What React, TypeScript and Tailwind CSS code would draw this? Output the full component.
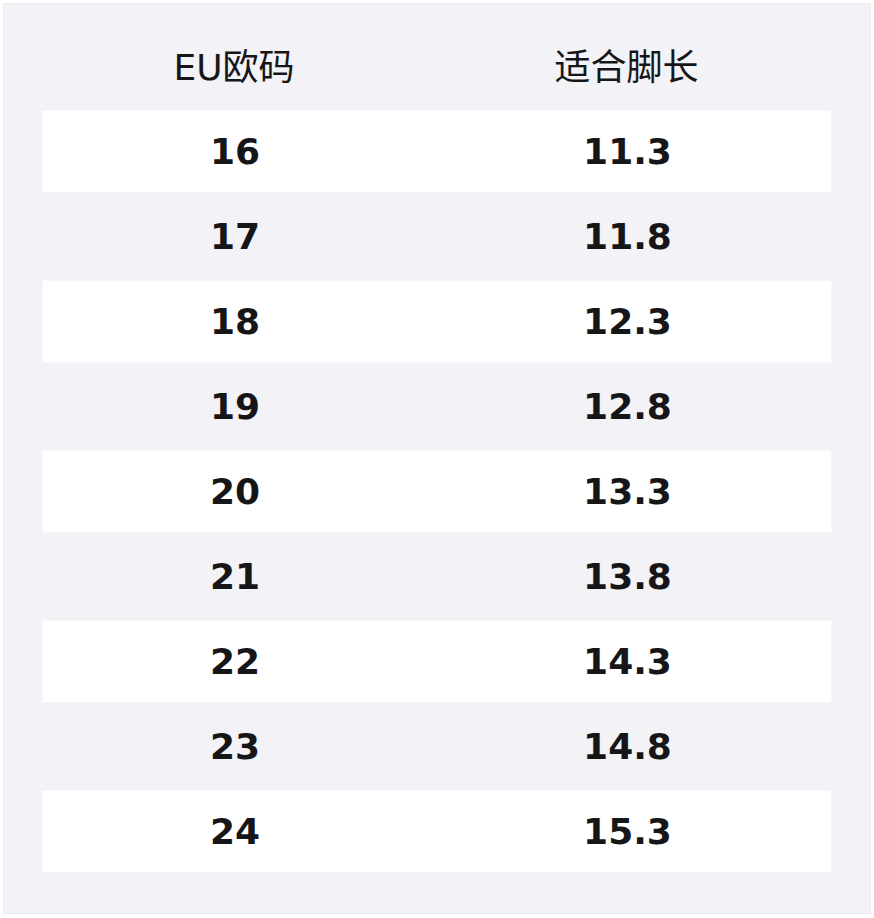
const rows: [string, string][] = [
  ['16', '11.3'],
  ['17', '11.8'],
  ['18', '12.3'],
  ['19', '12.8'],
  ['20', '13.3'],
  ['21', '13.8'],
  ['22', '14.3'],
  ['23', '14.8'],
  ['24', '15.3'],
];

export default function App() {
  return (
    <div className="min-h-[918px] w-[874px] bg-white p-[3px] font-['DejaVu_Sans','Noto_Sans_CJK_SC',sans-serif] text-[#161618]">
      <div className="border border-[#ebebf0] bg-[#f2f2f7] px-[38px] pb-[39px] pt-[23px]">
        <div className="grid h-[82px] grid-cols-[384px_1fr] items-center text-center text-[36px]">
          <div>EU欧码</div>
          <div className="pr-[5px]">适合脚长</div>
        </div>
        {rows.map(([eu, len], i) => (
          <div key={eu} className="flex h-[85px] flex-col py-[1px]">
            <div
              className={
                i % 2 === 0
                  ? 'grid flex-1 grid-cols-[384px_1fr] items-center border border-[#f7f7fa] bg-white text-center text-[36px] font-bold'
                  : 'grid flex-1 grid-cols-[384px_1fr] items-center border border-transparent text-center text-[36px] font-bold'
              }
            >
              <div>{eu}</div>
              <div className="pr-[3px]">{len}</div>
            </div>
          </div>
        ))}
      </div>
    </div>
  );
}
